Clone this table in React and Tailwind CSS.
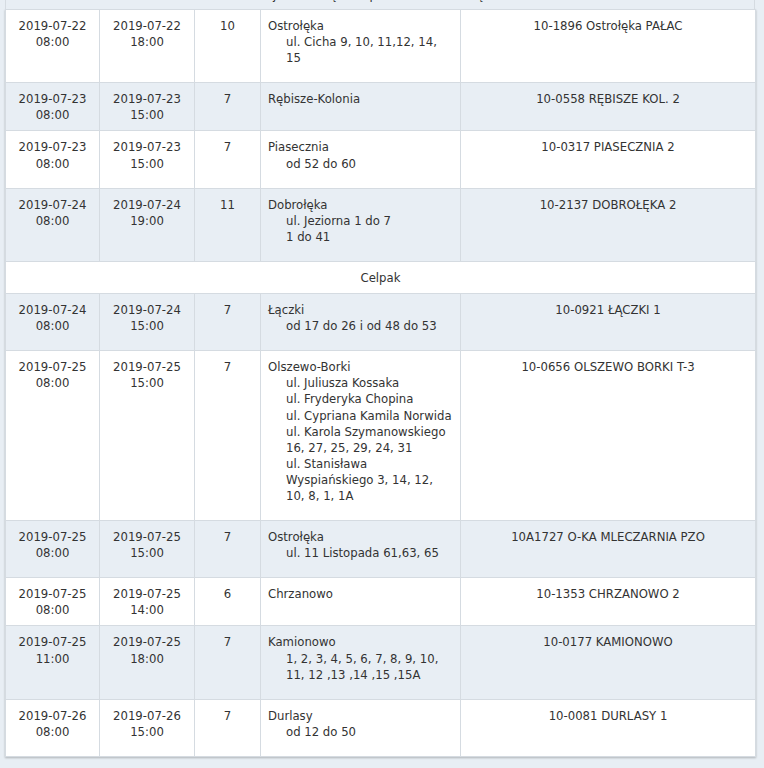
import React from "react";

const rows = [
  { a: ["2019-07-22", "08:00"], b: ["2019-07-22", "18:00"], n: "10", loc: "Ostrołęka", sub: ["ul. Cicha 9, 10, 11,12, 14,", "15"], st: "10-1896 Ostrołęka PAŁAC", alt: false },
  { a: ["2019-07-23", "08:00"], b: ["2019-07-23", "15:00"], n: "7", loc: "Rębisze-Kolonia", sub: [], st: "10-0558 RĘBISZE KOL. 2", alt: true },
  { a: ["2019-07-23", "08:00"], b: ["2019-07-23", "15:00"], n: "7", loc: "Piasecznia", sub: ["od 52 do 60"], st: "10-0317 PIASECZNIA 2", alt: false },
  { a: ["2019-07-24", "08:00"], b: ["2019-07-24", "19:00"], n: "11", loc: "Dobrołęka", sub: ["ul. Jeziorna 1 do 7", "1 do 41"], st: "10-2137 DOBROŁĘKA 2", alt: true },
  { section: "Celpak" },
  { a: ["2019-07-24", "08:00"], b: ["2019-07-24", "15:00"], n: "7", loc: "Łączki", sub: ["od 17 do 26 i od 48 do 53"], st: "10-0921 ŁĄCZKI 1", alt: true },
  {
    a: ["2019-07-25", "08:00"], b: ["2019-07-25", "15:00"], n: "7", loc: "Olszewo-Borki",
    sub: [
      "ul. Juliusza Kossaka",
      "ul. Fryderyka Chopina",
      "ul. Cypriana Kamila Norwida",
      "ul. Karola Szymanowskiego",
      "16, 27, 25, 29, 24, 31",
      "ul. Stanisława",
      "Wyspiańskiego 3, 14, 12,",
      "10, 8, 1, 1A",
    ],
    st: "10-0656 OLSZEWO BORKI T-3", alt: false,
  },
  { a: ["2019-07-25", "08:00"], b: ["2019-07-25", "15:00"], n: "7", loc: "Ostrołęka", sub: ["ul. 11 Listopada 61,63, 65"], st: "10A1727 O-KA MLECZARNIA PZO", alt: true },
  { a: ["2019-07-25", "08:00"], b: ["2019-07-25", "14:00"], n: "6", loc: "Chrzanowo", sub: [], st: "10-1353 CHRZANOWO 2", alt: false },
  { a: ["2019-07-25", "11:00"], b: ["2019-07-25", "18:00"], n: "7", loc: "Kamionowo", sub: ["1, 2, 3, 4, 5, 6, 7, 8, 9, 10,", "11, 12 ,13 ,14 ,15 ,15A"], st: "10-0177 KAMIONOWO", alt: true },
  { a: ["2019-07-26", "08:00"], b: ["2019-07-26", "15:00"], n: "7", loc: "Durlasy", sub: ["od 12 do 50"], st: "10-0081 DURLASY 1", alt: false },
];

const td = "border border-[#d5dbe1] pt-[8px] pb-[7px] align-top";

export default function App() {
  return (
    <div
      className="min-h-[768px] bg-[#e8eef4] pl-[5px] text-[11.7px] leading-[16.1px] text-[#333333]"
      style={{ fontFamily: '"DejaVu Sans", Verdana, sans-serif' }}
    >
      <div className="relative w-[750px] h-[9px] overflow-hidden border-x border-[#d5dbe1] bg-[#e8eef4]">
        <div className="absolute left-0 right-0 top-[-13px] text-center whitespace-nowrap">
          Rejon Ostrołęka — planowane (Ostrołęka)
        </div>
      </div>
      <table className="w-[750px] table-fixed border-collapse shadow-[0_1px_2px_rgba(0,0,0,0.25)]">
        <colgroup>
          <col className="w-[94px]" />
          <col className="w-[95px]" />
          <col className="w-[66px]" />
          <col className="w-[200px]" />
          <col className="w-[295px]" />
        </colgroup>
        <tbody>
          {rows.map((r, i) =>
            r.section ? (
              <tr key={i} className="bg-white">
                <td colSpan={5} className={td + " text-center"}>
                  {r.section}
                </td>
              </tr>
            ) : (
              <tr key={i} className={r.alt ? "bg-[#e8eef4]" : "bg-white"}>
                <td className={td + " text-center"}>
                  <div>{r.a[0]}</div>
                  <div>{r.a[1]}</div>
                </td>
                <td className={td + " text-center"}>
                  <div>{r.b[0]}</div>
                  <div>{r.b[1]}</div>
                </td>
                <td className={td + " text-center"}>{r.n}</td>
                <td className={td + " pl-[7px] pr-[7px]"}>
                  <div className="whitespace-nowrap">{r.loc}</div>
                  {r.sub.length > 0 && (
                    <div className="pl-[18px] pb-[9px]">
                      {r.sub.map((s, j) => (
                        <div key={j} className="whitespace-nowrap">
                          {s}
                        </div>
                      ))}
                    </div>
                  )}
                </td>
                <td className={td + " text-center"}>{r.st}</td>
              </tr>
            )
          )}
        </tbody>
      </table>
    </div>
  );
}
